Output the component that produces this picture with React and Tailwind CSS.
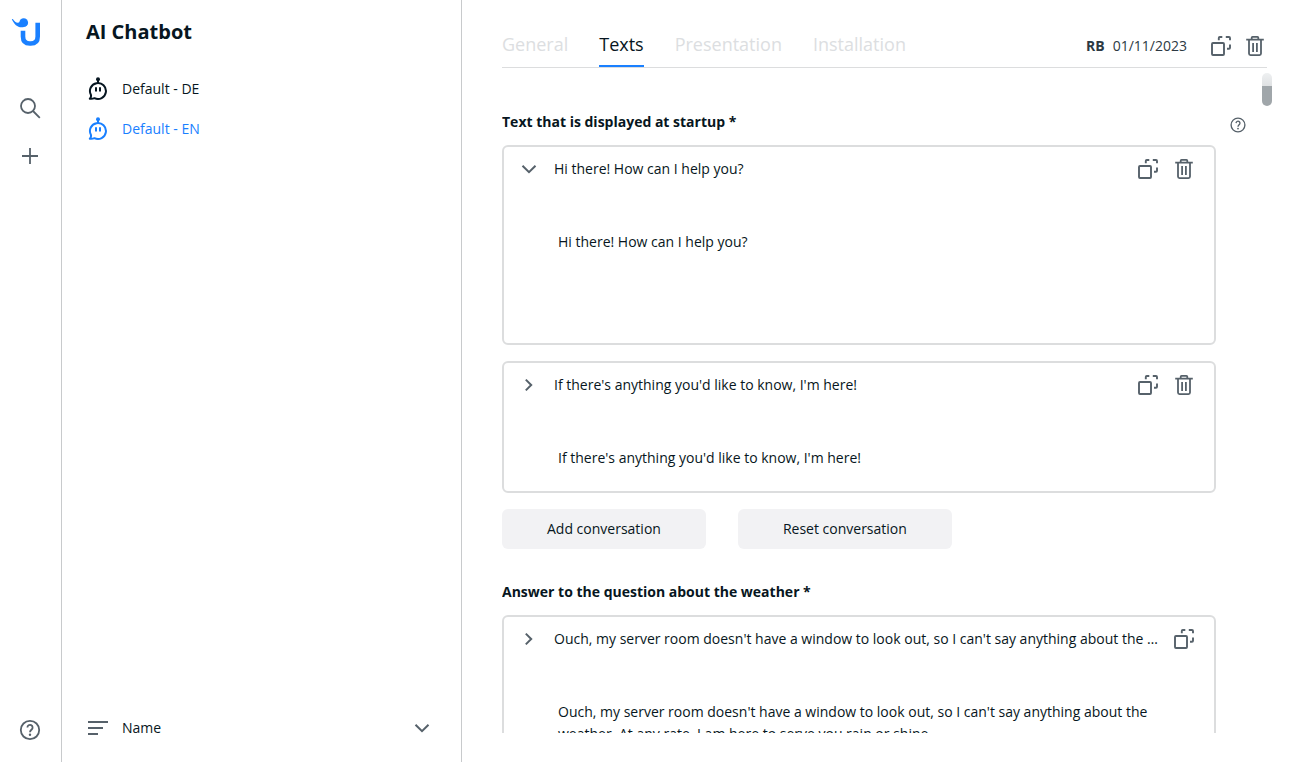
import { useState } from "react";

const Logo = () => (
  <svg width="38" height="32" viewBox="11 16 38 32" fill="none" aria-hidden="true">
    <path d="M23 30.700V36.500Q23 43.500 29.800 43.500H30.800Q37.700 43.500 37.700 36.500V22.700" stroke="#1a80ff" strokeWidth="4.600" />
    <circle cx="23.700" cy="22.700" r="4.400" fill="#1a80ff" />
    <path d="M11.800 19.200L12.800 18.900C15 22 17 23.800 20 22L24 27C18.500 28.500 14.500 25 11.800 19.200Z" fill="#1a80ff" />
  </svg>
);

const SearchIcon = () => (
  <svg width="24" height="24" viewBox="0 0 24 24" fill="none" stroke="currentColor" strokeWidth="1.800" aria-hidden="true">
    <circle cx="10" cy="10" r="7" />
    <path d="M15 15l6.800 6.800" />
  </svg>
);

const PlusIcon = () => (
  <svg width="24" height="24" viewBox="0 0 24 24" fill="none" stroke="currentColor" strokeWidth="1.800" aria-hidden="true">
    <path d="M12 4v16M4 12h16" />
  </svg>
);

const HelpIcon = ({ size = 24 }) => (
  <svg width={size} height={size} viewBox="0 0 24 24" fill="none" stroke="currentColor" strokeWidth="1.800" aria-hidden="true">
    <circle cx="12" cy="12" r="9.200" />
    <path d="M9.400 9.500a2.600 2.600 0 1 1 4.300 2c-.9.8-1.700 1.300-1.700 2.700" />
    <circle cx="12" cy="16.700" r="1.200" fill="currentColor" stroke="none" />
  </svg>
);

const BotIcon = () => (
  <svg width="24" height="24" viewBox="0 0 24 24" fill="none" stroke="currentColor" strokeWidth="2" aria-hidden="true">
    <circle cx="12" cy="2.200" r="2" fill="currentColor" stroke="none" />
    <path d="M12 3v3" />
    <path d="M4.900 17.800A8 8 0 1 1 8.400 21.200Q6.500 22 3.800 21.700Q5.500 20.200 4.900 17.800Z" strokeLinejoin="round" />
    <path d="M10 10.300v4.200M14 10.300v4.200" />
  </svg>
);

const CopyIcon = () => (
  <svg width="24" height="24" viewBox="0 0 24 24" fill="none" stroke="currentColor" strokeWidth="1.900" aria-hidden="true">
    <rect x="3" y="9" width="12" height="12" rx="1" />
    <path d="M9.800 6.300V4q0-1 1-1h2.500M16.800 3H20q1 0 1 1v2.300M21 10.500V13.700q0 1-1 1H18" />
  </svg>
);

const TrashIcon = () => (
  <svg width="24" height="24" viewBox="0 0 24 24" fill="none" stroke="currentColor" strokeWidth="1.800" aria-hidden="true">
    <path d="M3.200 5.700h17.600M8.700 5.500V3.700q0-.8.800-.8h5q.8 0 .8.800v1.800" />
    <path d="M6 6v13.600q0 1.500 1.500 1.500h9q1.500 0 1.500-1.500V6M10.100 9v9M13.900 9v9" />
  </svg>
);

const ChevronIcon = ({ open }) => (
  <svg width="24" height="24" viewBox="0 0 24 24" fill="none" stroke="currentColor" strokeWidth="2" aria-hidden="true">
    {open ? <path d="M5.500 8.700L12 15.200l6.500-6.500" /> : <path d="M8.800 6.600l5.400 5.400-5.400 5.400" />}
  </svg>
);

const SortIcon = () => (
  <svg width="24" height="24" viewBox="0 0 24 24" fill="none" stroke="currentColor" strokeWidth="1.800" aria-hidden="true">
    <path d="M2 6h20M2 12h15M2 18h10" />
  </svg>
);

const bots = ["Default - DE", "Default - EN"];
const tabs = ["General", "Texts", "Presentation", "Installation"];

const IconButton = ({ label, children }) => (
  <button type="button" aria-label={label} className="flex size-6 shrink-0 items-center justify-center text-[#56616a]">
    {children}
  </button>
);

const Conversation = ({ text, open, canDelete, className }) => (
  <article className={`rounded-md border-2 border-[#dcddde] ${className}`}>
    <div className="flex h-11 items-center pr-[18px] pl-[13px]">
      <button type="button" aria-label="Toggle" aria-expanded={!!open} className="mr-[13px] size-6 shrink-0 text-[#56616a]">
        <ChevronIcon open={open} />
      </button>
      <p className="min-w-0 flex-1 truncate">{text}</p>
      <div className="ml-2.5 flex gap-3">
        <IconButton label="Duplicate"><CopyIcon /></IconButton>
        {canDelete && <IconButton label="Delete"><TrashIcon /></IconButton>}
      </div>
    </div>
    <p className="mt-10 pr-13 pl-13.5 leading-[22px]">{text}</p>
  </article>
);

const App = () => {
  const [bot, setBot] = useState("Default - EN");
  const [tab, setTab] = useState("Texts");

  return (
    <div className="flex h-screen bg-white font-['Open_Sans',sans-serif] text-sm text-[#071621]">
      <nav className="flex w-[62px] shrink-0 flex-col items-center border-r border-[#c8cacc] pt-4 pr-px pb-5 text-[#56616a]">
        <a href="#home" aria-label="Home"><Logo /></a>
        <button type="button" aria-label="Search" className="mt-12"><SearchIcon /></button>
        <button type="button" aria-label="Add" className="mt-6"><PlusIcon /></button>
        <button type="button" aria-label="Help" className="mt-auto"><HelpIcon /></button>
      </nav>

      <aside className="flex w-[400px] shrink-0 flex-col border-r border-[#c8cacc] px-6 pt-4 pb-4">
        <h1 className="text-xl leading-8 font-bold">AI Chatbot</h1>
        <ul className="mt-[21px]">
          {bots.map((name) => (
            <li key={name}>
              <button
                type="button"
                onClick={() => setBot(name)}
                className={`flex h-10 w-full items-center gap-3 ${bot === name ? "text-[#1a80ff]" : ""}`}
              >
                <BotIcon />
                {name}
              </button>
            </li>
          ))}
        </ul>
        <label className="mt-auto flex h-9 items-center gap-3 text-[#56616a]">
          <SortIcon />
          <select aria-label="Sort by" className="flex-1 appearance-none text-[#071621]">
            <option>Name</option>
          </select>
          <span className="pointer-events-none mr-[3px]"><ChevronIcon open /></span>
        </label>
      </aside>

      <main className="flex min-w-0 flex-1 flex-col pr-[18px] pb-[29px] pl-10">
        <header className="mr-[5px] flex h-[68px] shrink-0 items-end justify-between border-b border-[#dcddde]">
          <div role="tablist" className="flex gap-[31px]">
            {tabs.map((name) => (
              <button
                key={name}
                type="button"
                role="tab"
                aria-selected={tab === name}
                onClick={() => setTab(name)}
                className={`h-[45px] border-b-2 text-lg ${tab === name ? "border-[#1a80ff]" : "border-transparent text-[#dcdee1]"}`}
              >
                {name}
              </button>
            ))}
          </div>
          <div className="mb-[9px] flex items-center text-[#2c3943]">
            <strong className="mr-2">RB</strong>
            <time>01/11/2023</time>
            <div className="ml-[22px] flex gap-2.5">
              <IconButton label="Duplicate"><CopyIcon /></IconButton>
              <IconButton label="Delete"><TrashIcon /></IconButton>
            </div>
          </div>
        </header>

        <div className="relative min-h-0 flex-1 overflow-hidden">
          <div className="absolute top-[5px] right-0 h-[33px] w-2.5 rounded-full bg-linear-to-b from-[#eef0f1] from-0% via-[#dfe1e3] via-40% to-[#a0a6aa] to-40%" />
          <div className="mr-14">
            <section className="pt-11">
              <div className="relative">
                <h2 className="leading-5 font-bold">Text that is displayed at startup *</h2>
                <button type="button" aria-label="Help" className="absolute top-1 -right-[31px] text-[#56616a]">
                  <HelpIcon size={18} />
                </button>
              </div>
              <Conversation text="Hi there! How can I help you?" open canDelete className="mt-[13px] h-[200px]" />
              <Conversation text="If there's anything you'd like to know, I'm here!" canDelete className="mt-4 h-[132px]" />
              <div className="mt-4 flex gap-8">
                <button type="button" className="h-10 rounded-md bg-[#f2f2f4] px-[45px] font-medium">Add conversation</button>
                <button type="button" className="h-10 rounded-md bg-[#f2f2f4] px-[45px] font-medium">Reset conversation</button>
              </div>
            </section>
            <section className="mt-[33px]">
              <h2 className="leading-5 font-bold">Answer to the question about the weather *</h2>
              <Conversation
                text="Ouch, my server room doesn't have a window to look out, so I can't say anything about the weather. At any rate, I am here to serve you rain or shine."
                className="mt-[13px] h-[200px]"
              />
            </section>
          </div>
        </div>
      </main>
    </div>
  );
};

export default App;
